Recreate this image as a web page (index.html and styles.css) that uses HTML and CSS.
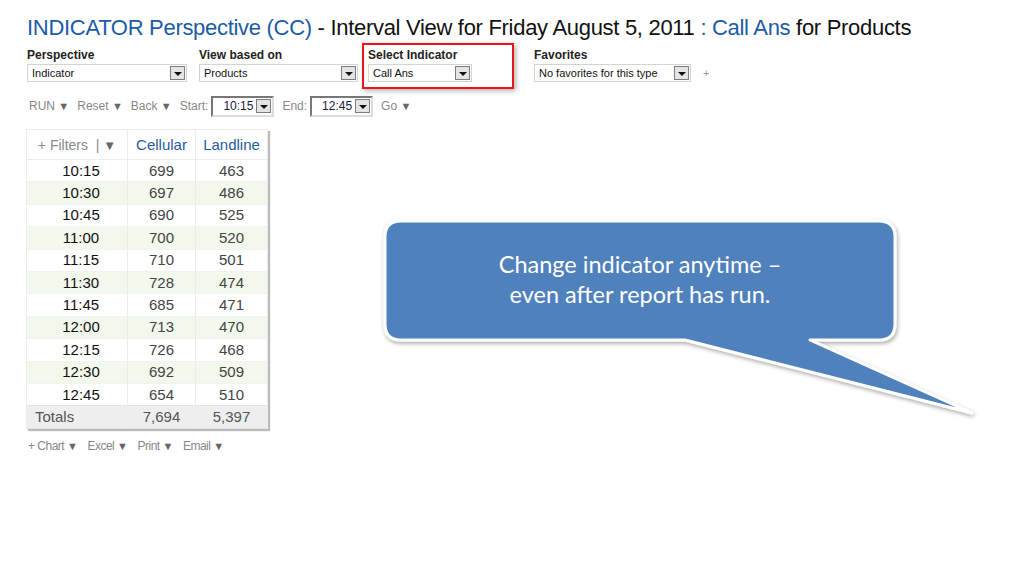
FILE: index.html
```html
<!DOCTYPE html>
<html lang="en">
<head>
    <title>Interval View</title>
    <link rel="stylesheet" href="styles.css">
</head>
<body>
    <div class="page">
        <h1 class="title"><span class="blue">INDICATOR Perspective (CC)</span> - Interval View for Friday August 5, 2011 <span class="blue">: Call Ans</span> for Products</h1>

        <div class="filters">
            <div class="field">
                <label>Perspective</label>
                <div class="select w-persp"><span>Indicator</span><i class="drop"></i></div>
            </div>
            <div class="field">
                <label>View based on</label>
                <div class="select w-view"><span>Products</span><i class="drop"></i></div>
            </div>
            <div class="field highlight">
                <label>Select Indicator</label>
                <div class="select w-ind"><span>Call Ans</span><i class="drop"></i></div>
            </div>
            <div class="field">
                <label>Favorites</label>
                <div class="fav-row">
                    <div class="select w-fav"><span>No favorites for this type</span><i class="drop"></i></div>
                    <span class="plus">+</span>
                </div>
            </div>
        </div>

        <div class="toolbar">
            <span class="tool">RUN <b>&#9660;</b></span>
            <span class="tool">Reset <b>&#9660;</b></span>
            <span class="tool">Back <b>&#9660;</b></span>
            <span class="tool">Start:</span>
            <div class="select time"><span>10:15</span><i class="drop"></i></div>
            <span class="tool">End:</span>
            <div class="select time"><span>12:45</span><i class="drop"></i></div>
            <span class="tool">Go <b>&#9660;</b></span>
        </div>

        <table class="grid">
            <thead>
                <tr>
                    <th class="filt">+ Filters &nbsp;| <b>&#9660;</b></th>
                    <th class="c-cell">Cellular</th>
                    <th class="c-land">Landline</th>
                </tr>
            </thead>
            <tbody>
                <tr><td class="time-col">10:15</td><td>699</td><td>463</td></tr>
                <tr><td class="time-col">10:30</td><td>697</td><td>486</td></tr>
                <tr><td class="time-col">10:45</td><td>690</td><td>525</td></tr>
                <tr><td class="time-col">11:00</td><td>700</td><td>520</td></tr>
                <tr><td class="time-col">11:15</td><td>710</td><td>501</td></tr>
                <tr><td class="time-col">11:30</td><td>728</td><td>474</td></tr>
                <tr><td class="time-col">11:45</td><td>685</td><td>471</td></tr>
                <tr><td class="time-col">12:00</td><td>713</td><td>470</td></tr>
                <tr><td class="time-col">12:15</td><td>726</td><td>468</td></tr>
                <tr><td class="time-col">12:30</td><td>692</td><td>509</td></tr>
                <tr><td class="time-col">12:45</td><td>654</td><td>510</td></tr>
            </tbody>
            <tfoot>
                <tr><td class="tot-label">Totals</td><td>7,694</td><td>5,397</td></tr>
            </tfoot>
        </table>

        <div class="actions">
            <span>+ Chart <b>&#9660;</b></span>
            <span>Excel <b>&#9660;</b></span>
            <span>Print <b>&#9660;</b></span>
            <span>Email <b>&#9660;</b></span>
        </div>
    </div>

    <div class="callout">
        <svg width="610" height="215" viewBox="0 0 610 215">
            <defs>
                <filter id="shade" x="-5%" y="-5%" width="110%" height="120%">
                    <feDropShadow dx="1" dy="2" stdDeviation="2" flood-color="#000" flood-opacity="0.35"/>
                </filter>
            </defs>
            <path d="M21 6 H499 Q515 6 515 22 V109 Q515 125 499 125 H430 L592 198 L305 125 H21 Q5 125 5 109 V22 Q5 6 21 6 Z"
                  fill="#4f81bd" stroke="#fff" stroke-width="3" stroke-linejoin="round" filter="url(#shade)"/>
        </svg>
        <p class="callout-text">Change indicator anytime –<br>even after report has run.</p>
    </div>
</body>
</html>
```

FILE: styles.css
```css
body {
    margin: 0;
    background: #fff;
    font-family: "Liberation Sans", Arial, sans-serif;
    color: #222;
}

.page {
    padding: 14px 0 0 26px;
}

.title {
    margin: 0 0 0 1px;
    font-size: 22px;
    font-weight: normal;
    color: #111;
    white-space: nowrap;
    line-height: 28px;
    letter-spacing: -0.3px;
}

.blue {
    color: #1c5ba6;
}

/* filter row */
.filters {
    display: flex;
    align-items: flex-start;
    margin-top: 1px;
}

.field {
    display: flex;
    flex-direction: column;
    margin-right: 12px;
    padding-top: 5px;
}

.field:first-child {
    margin-left: 1px;
}

.field label {
    font-size: 12px;
    font-weight: bold;
    color: #222;
    line-height: 14px;
    margin-bottom: 2px;
}

.field.highlight {
    border: 2px solid #e8131b;
    padding: 3px 40px 5px 4px;
    margin: 0 20px 0 -8px;
    box-shadow: 2px 2px 5px rgba(0,0,0,0.3);
}

.select {
    display: flex;
    align-items: center;
    justify-content: space-between;
    height: 18px;
    border: 1px solid #d4d4d4;
    background: #fff;
    box-sizing: border-box;
    padding: 0 1px 0 4px;
    font-size: 11px;
    color: #111;
}

.w-persp { width: 160px; }
.w-view { width: 159px; }
.w-ind { width: 104px; }
.w-fav { width: 157px; }

.drop {
    width: 15px;
    height: 14px;
    border: 1px solid #7d7d7d;
    background: #e4e4e4;
    position: relative;
    box-sizing: border-box;
}

.drop::after {
    content: "";
    position: absolute;
    left: 3px;
    top: 5px;
    border-left: 4px solid transparent;
    border-right: 4px solid transparent;
    border-top: 4px solid #111;
}

.fav-row {
    display: flex;
    align-items: center;
}

.plus {
    margin-left: 12px;
    font-size: 11px;
    color: #999;
}

/* toolbar */
.toolbar {
    display: flex;
    align-items: center;
    gap: 8px;
    margin-top: 6px;
    margin-left: 3px;
    height: 22px;
}

.tool {
    font-size: 12px;
    color: #888;
}

.tool b, .actions b {
    color: #666;
    font-size: 11px;
}

.select.time {
    width: 63px;
    height: 21px;
    border: 2px solid;
    border-color: #777 #ddd #ddd #777;
    padding: 0 1px 0 10px;
    font-size: 12px;
    color: #1a1a40;
    margin-left: -5px;
}

/* data table */
.grid {
    border-collapse: collapse;
    margin-top: 12px;
    border: 1px solid #e2e2e2;
    box-shadow: 2px 2px 1px #bbb;
    font-size: 15px;
    color: #444;
}

.grid th {
    height: 29px;
    font-weight: normal;
    font-size: 15px;
    color: #1f5ca4;
    border: 1px solid #ececec;
    padding: 0;
}

.grid th.filt {
    width: 100px;
    color: #888;
    font-size: 14px;
}

.grid th.filt b {
    color: #666;
    font-size: 13px;
}

.grid th.c-cell { width: 67px; }
.grid th.c-land { width: 71px; }

.grid td {
    height: 21.4px;
    padding: 0;
    text-align: center;
    border-left: 1px solid #ececec;
    border-right: 1px solid #ececec;
    border-top: 1px solid #f2f2f2;
    line-height: 14px;
}

.grid tbody tr:nth-child(even) td {
    background: #f3f8ec;
}

.grid td.time-col {
    color: #111;
    padding-left: 8px;
}

.grid tfoot td {
    background: #eeeeee;
    height: 22px;
    border-top: 1px solid #e2e2e2;
    color: #555;
}

.grid td.tot-label {
    text-align: left;
    padding-left: 8px;
}

.actions {
    display: flex;
    gap: 10px;
    margin: 10px 0 0 2px;
    font-size: 12px;
    color: #888;
    letter-spacing: -0.5px;
}

/* callout bubble */
.callout {
    position: absolute;
    left: 380px;
    top: 215px;
    width: 610px;
    height: 215px;
}

.callout svg {
    display: block;
}

.callout-text {
    position: absolute;
    top: 34px;
    left: 5px;
    width: 510px;
    margin: 0;
    text-align: center;
    font-family: Lato, "Open Sans", sans-serif;
    font-size: 23.5px;
    line-height: 30px;
    color: #fff;
}
```
